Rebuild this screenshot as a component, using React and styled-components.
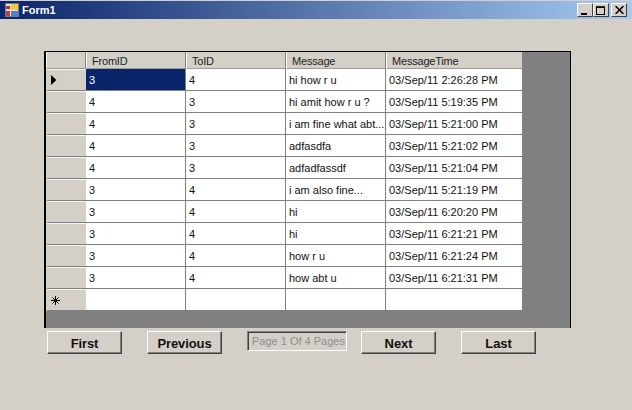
import React from "react";
import styled, { createGlobalStyle } from "styled-components";

const Global = createGlobalStyle`
  html, body { margin: 0; padding: 0; background: #d4d0c8; }
  body { font-family: "Liberation Sans", Arial, sans-serif; overflow: hidden; }
`;
const Win = styled.div`
  width: 632px; height: 410px; background: #d4d0c8; display: flex; flex-direction: column;
`;
const TitleBar = styled.div`
  height: 18px; margin-top: 1px; background: linear-gradient(90deg, #0a246a, #a6caf0);
  display: flex; align-items: center; padding: 0 5px 0 5px; box-sizing: border-box;
  color: #fff; font-weight: bold; font-size: 11px; gap: 3px;
`;
const TitleText = styled.span` flex: 1; `;
const CaptionButtons = styled.div` display: flex; `;
const CapBtn = styled.div`
  width: 16px; height: 14px; margin-left: ${p => p.$gap}px; box-sizing: border-box; background: #d4d0c8;
  border: 1px solid; border-color: #fff #404040 #404040 #fff;
  display: flex; align-items: center; justify-content: center;
`;
const Content = styled.div`
  flex: 1; display: flex; flex-direction: column; padding: 32px 0 0 44px;
`;
const GridFrame = styled.div`
  width: 527px; height: 277px; box-sizing: border-box;
  background: #808080; border: 1px solid #000; border-bottom: 0; border-left-width: 2px;
`;
const Table = styled.div`
  display: grid; grid-template-columns: 40px 100px 100px 100px 137px;
  grid-template-rows: 17px repeat(11, 22px); width: 477px;
  font-size: 11px; color: #111;
`;
const HeaderCell = styled.div`
  background: #d4d0c8; box-sizing: border-box; padding-left: 5px; line-height: 18px; letter-spacing: -.2px;
  border-right: 1px solid #808080; border-left: 1px solid #fff; border-bottom: 1px solid #a09c94; color: #222;
`;
const RowHead = styled.div`
  background: #d4d0c8; box-sizing: border-box; border-top: 1px solid #f4f4f0;
  border-bottom: 1px solid #808080; border-left: 2px solid #d4d0c8;
  display: flex; align-items: center; padding-left: 3px;
`;
const Cell = styled.div`
  box-sizing: border-box; background: ${p => (p.$sel ? "#0a246a" : "#fff")}; color: ${p => (p.$sel ? "#fff" : "#111")};
  border-right: 1px solid #808080; border-bottom: 1px solid #808080;
  padding-left: 3px; line-height: 22px; white-space: nowrap; overflow: hidden;
`;
const Buttons = styled.div`
  display: flex; align-items: flex-start; padding: 3px 0 0 3px;
`;
const Btn = styled.div`
  width: 75px; height: 23px; margin-right: ${p => p.$mr}px; box-sizing: border-box; background: #d4d0c8;
  border: 1px solid; border-color: #fff #404040 #404040 #fff; box-shadow: inset -1px -1px 0 #808080;
  font: bold 13px "Liberation Sans", Arial, sans-serif; letter-spacing: -.1px; color: #111; padding-top: 2px;
  display: flex; align-items: center; justify-content: center;
`;
const PageBox = styled.div`
  width: 100px; height: 20px; margin-right: 14px; box-sizing: border-box; background: #d4d0c8;
  border: 1px solid; border-color: #808080 #fff #fff #808080; box-shadow: inset 1px 1px 0 #404040;
  font-size: 11px; line-height: 19px; padding-left: 4px; color: #8e8e8e; white-space: nowrap; overflow: hidden;
`;

const rows = [
  ["3", "4", "hi how r u", "03/Sep/11 2:26:28 PM"],
  ["4", "3", "hi amit how r u ?", "03/Sep/11 5:19:35 PM"],
  ["4", "3", "i am fine what abt...", "03/Sep/11 5:21:00 PM"],
  ["4", "3", "adfasdfa", "03/Sep/11 5:21:02 PM"],
  ["4", "3", "adfadfassdf", "03/Sep/11 5:21:04 PM"],
  ["3", "4", "i am also fine...", "03/Sep/11 5:21:19 PM"],
  ["3", "4", "hi", "03/Sep/11 6:20:20 PM"],
  ["3", "4", "hi", "03/Sep/11 6:21:21 PM"],
  ["3", "4", "how r u", "03/Sep/11 6:21:24 PM"],
  ["3", "4", "how abt u", "03/Sep/11 6:21:31 PM"],
  ["", "", "", ""],
];

const Arrow = () => (
  <svg width="6" height="10" viewBox="0 0 6 10"><path d="M0 0 L5.5 5 L0 10Z" fill="#000" /></svg>
);
const Star = () => (
  <svg width="9" height="9" viewBox="0 0 9 9" stroke="#000" strokeWidth="1">
    <path d="M4.5 0V9M0 4.5H9M1.5 1.5L7.5 7.5M7.5 1.5L1.5 7.5" />
  </svg>
);
const FormIcon = () => (
  <svg width="14" height="14" viewBox="0 0 14 14">
    <rect x="0.5" y="0.5" width="13" height="13" fill="#e8e4dc" stroke="#6a7a9a" />
    <rect x="6" y="1" width="7" height="6" fill="#f8c840" />
    <rect x="1" y="3" width="4" height="3" fill="#d03020" />
    <rect x="1" y="8" width="4" height="5" fill="#c04030" />
    <rect x="6" y="8" width="7" height="5" fill="#5080d0" />
  </svg>
);

export default function App() {
  return (
    <Win>
      <Global />
      <TitleBar>
        <FormIcon />
        <TitleText>Form1</TitleText>
        <CaptionButtons>
          <CapBtn $gap={0}>
            <svg width="8" height="9" viewBox="0 0 8 9"><rect x="0" y="7" width="6" height="2" fill="#000" /></svg>
          </CapBtn>
          <CapBtn $gap={0}>
            <svg width="10" height="9" viewBox="0 0 10 9" fill="none" stroke="#000"><rect x="0.5" y="1" width="8" height="7.5" /><path d="M0 1.2H9" strokeWidth="1.5" /></svg>
          </CapBtn>
          <CapBtn $gap={2}>
            <svg width="9" height="8" viewBox="0 0 9 8" stroke="#000" strokeWidth="1.5"><path d="M0.5 0L8.5 8M8.5 0L0.5 8" /></svg>
          </CapBtn>
        </CaptionButtons>
      </TitleBar>
      <Content>
        <GridFrame>
          <Table>
            <HeaderCell />
            <HeaderCell>FromID</HeaderCell>
            <HeaderCell>ToID</HeaderCell>
            <HeaderCell>Message</HeaderCell>
            <HeaderCell>MessageTime</HeaderCell>
            {rows.map((r, i) => (
              <React.Fragment key={i}>
                <RowHead>{i === 0 ? <Arrow /> : i === 10 ? <Star /> : null}</RowHead>
                {r.map((c, j) => (
                  <Cell key={j} $sel={i === 0 && j === 0}>{c}</Cell>
                ))}
              </React.Fragment>
            ))}
          </Table>
        </GridFrame>
        <Buttons>
          <Btn $mr={25}>First</Btn>
          <Btn $mr={25}>Previous</Btn>
          <PageBox>Page 1 Of 4 Pages</PageBox>
          <Btn $mr={25}>Next</Btn>
          <Btn $mr={0}>Last</Btn>
        </Buttons>
      </Content>
    </Win>
  );
}
